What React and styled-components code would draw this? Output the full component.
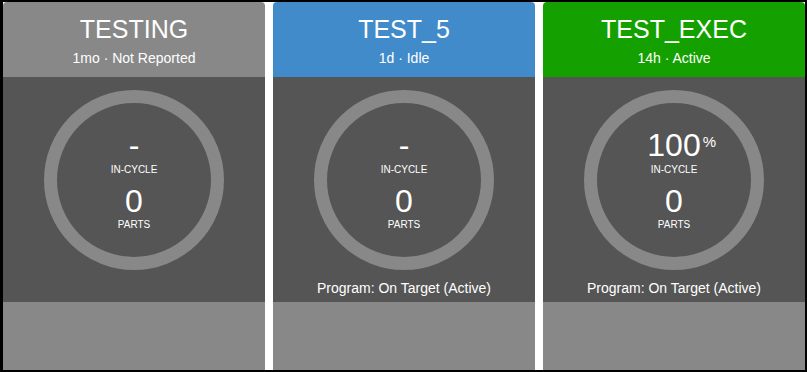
import styled, { createGlobalStyle } from "styled-components";

const Global = createGlobalStyle`
  html, body {
    margin: 0;
    padding: 0;
    background: #ffffff;
    font-family: "Liberation Sans", Arial, sans-serif;
  }
`;

const Frame = styled.div`
  box-sizing: border-box;
  width: 807px;
  height: 372px;
  border: 2px solid #000000;
  border-left-width: 3px;
  background: #ffffff;
  display: grid;
  grid-template-columns: repeat(3, 262px);
  column-gap: 8px;
`;

const Card = styled.div`
  display: grid;
  grid-template-rows: 75px 225px 1fr;
  border-radius: 4px 4px 0 0;
  overflow: hidden;
  color: #ffffff;
`;

const Header = styled.div`
  background: ${(p) => p.$color};
  display: flex;
  flex-direction: column;
  align-items: center;
  padding-top: 12px;
`;

const Title = styled.div`
  font-size: 25px;
  line-height: 30px;
`;

const Sub = styled.div`
  margin-top: 5px;
  font-size: 14px;
  line-height: 18px;
`;

const Body = styled.div`
  background: #555555;
  display: flex;
  flex-direction: column;
  align-items: center;
  padding-top: 13px;
`;

const Ring = styled.div`
  box-sizing: border-box;
  width: 180px;
  height: 180px;
  border: 13px solid #888888;
  border-radius: 50%;
  display: flex;
  flex-direction: column;
  align-items: center;
  justify-content: center;
`;

const Value = styled.div`
  position: relative;
  font-size: 32px;
  line-height: 32px;
  margin-top: ${(p) => p.$gap || 0}px;
`;

const Unit = styled.span`
  position: absolute;
  left: calc(100% + 2px);
  top: 5px;
  font-size: 15px;
  line-height: 15px;
`;

const Label = styled.div`
  font-size: 10px;
  line-height: 12px;
  margin-top: ${(p) => p.$gap}px;
`;

const Program = styled.div`
  margin-top: 9px;
  font-size: 14px;
  line-height: 18px;
`;

const Footer = styled.div`
  background: #888888;
`;

const machines = [
  { name: "TESTING", status: "1mo · Not Reported", color: "#888888", cycle: "-", parts: "0" },
  { name: "TEST_5", status: "1d · Idle", color: "#428bca", cycle: "-", parts: "0", program: "Program: On Target (Active)" },
  { name: "TEST_EXEC", status: "14h · Active", color: "#14a100", cycle: "100", unit: "%", parts: "0", program: "Program: On Target (Active)" },
];

export default function App() {
  return (
    <>
      <Global />
      <Frame>
        {machines.map((m) => (
          <Card key={m.name}>
            <Header $color={m.color}>
              <Title>{m.name}</Title>
              <Sub>{m.status}</Sub>
            </Header>
            <Body>
              <Ring>
                <Value>
                  {m.cycle}
                  {m.unit && <Unit>{m.unit}</Unit>}
                </Value>
                <Label $gap={3}>IN-CYCLE</Label>
                <Value $gap={9}>{m.parts}</Value>
                <Label $gap={2}>PARTS</Label>
              </Ring>
              {m.program && <Program>{m.program}</Program>}
            </Body>
            <Footer />
          </Card>
        ))}
      </Frame>
    </>
  );
}
